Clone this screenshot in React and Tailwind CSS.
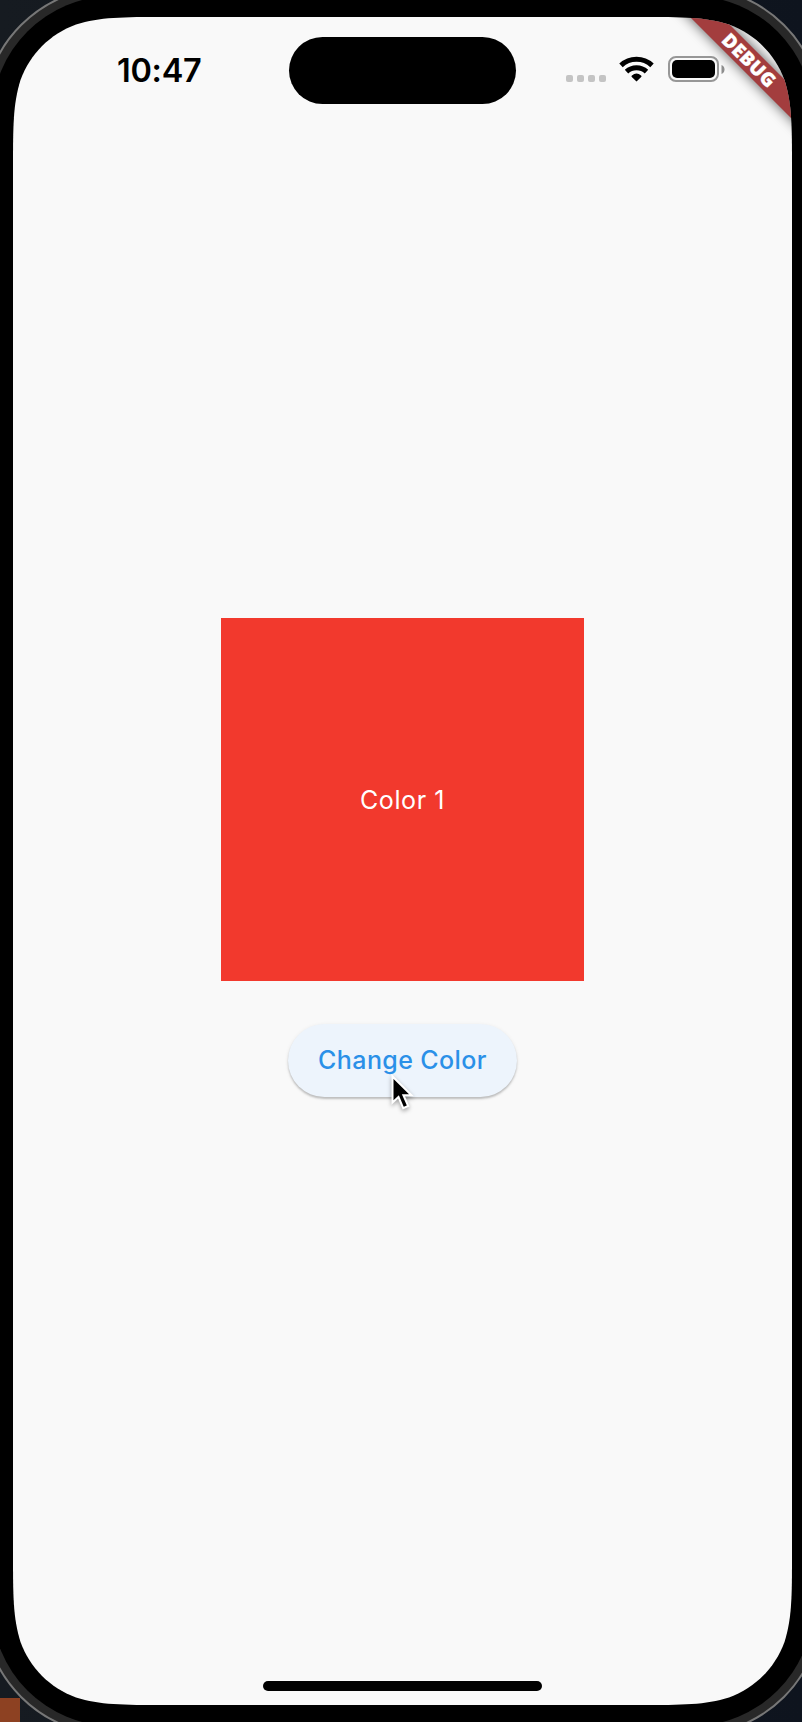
function WifiIcon() {
  return (
    <svg width="35" height="26" viewBox="0 0 35 26" className="block">
      <g fill="none" stroke="#000" strokeWidth="5">
        <path d="M2 9.4A22.6 22.6 0 0 1 33 9.4" />
        <path d="M7.5 15.6A14.6 14.6 0 0 1 27.5 15.6" />
      </g>
      <path d="M17.5 25.6l-4.7-4.7a1 1 0 0 1 .1-1.5a7.2 7.2 0 0 1 9.2 0a1 1 0 0 1 .1 1.5z" />
    </svg>
  );
}

function BatteryIcon() {
  return (
    <div className="flex items-center gap-[2px]">
      <div className="h-[26px] w-[51px] rounded-[8px] border-2 border-[#979797] p-[2px]">
        <div className="h-full rounded-[5px] bg-black" />
      </div>
      <svg width="4" height="9" viewBox="0 0 4 9">
        <path d="M.5 0Q3.5 1.2 3.5 4.5T.5 9z" fill="#8e8e8e" />
      </svg>
    </div>
  );
}

function DebugBanner() {
  return (
    <svg width="140" height="140" viewBox="639 0 140 140" className="absolute right-0 top-0">
      <defs>
        <filter id="soft" x="-30%" y="-30%" width="160%" height="160%">
          <feGaussianBlur stdDeviation="6.5" />
        </filter>
      </defs>
      <path d="M657 -20L689 -20L799 90L799 122Z" fill="#000" opacity=".65" filter="url(#soft)" />
      <path d="M657 -20L689 -20L799 90L799 122Z" fill="#a33d3e" />
      <text
        transform="translate(736 43.2) rotate(45)"
        y="6.8"
        textAnchor="middle"
        textLength="67"
        fill="#fff"
        stroke="#fff"
        strokeWidth=".3"
        className="font-['Open_Sans',sans-serif] text-[19px] font-extrabold"
      >
        DEBUG
      </text>
    </svg>
  );
}

function StatusBar() {
  return (
    <header className="flex h-[104px] items-start pt-[20px]">
      <div className="w-[276px] pl-[104px] pt-[14px] font-['Inter',sans-serif] text-[32.5px] font-semibold leading-[40px] tracking-[-0.3px] text-black">
        10:47
      </div>
      <div className="h-[67px] w-[227px] rounded-full bg-black" />
      <div className="flex pl-[50px] pt-[19px]">
        <div className="flex gap-[4px] pt-[19px]">
          <i className="size-[7px] rounded-[2px] bg-[#c4c4c4]" />
          <i className="size-[7px] rounded-[2px] bg-[#c4c4c4]" />
          <i className="size-[7px] rounded-[2px] bg-[#c4c4c4]" />
          <i className="size-[7px] rounded-[2px] bg-[#c4c4c4]" />
        </div>
        <div className="ml-[13px]">
          <WifiIcon />
        </div>
        <div className="ml-[14px]">
          <BatteryIcon />
        </div>
      </div>
    </header>
  );
}

function Cursor() {
  return (
    <svg width="28" height="44" viewBox="0 0 28 44" className="absolute left-[102px] top-[49px] drop-shadow-[0_2px_2px_rgba(0,0,0,0.35)]">
      <path
        d="M2.5 3.5V29.5L8.5 24L13.2 35.2L18.2 33L13.4 22.2H21.5Z"
        fill="#000"
        stroke="#fff"
        strokeWidth="2"
      />
    </svg>
  );
}

export default function App() {
  return (
    <div className="relative h-[1722px] w-[802px] overflow-hidden bg-linear-to-r from-[#161b21] to-[#0e141e]">
      <div className="absolute bottom-0 left-0 h-[24px] w-[20px] bg-[#8d4122]" />
      <div className="relative -ml-[18px] -mt-[14px] h-[1750px] w-[841px] rounded-[131px] border-2 border-[#777] bg-[#282828] p-[8px]">
        <div className="h-full rounded-[121px] bg-black p-[21px]">
          <main className="relative flex h-[1688px] w-[779px] flex-col items-center bg-[#f9f9f9] [clip-path:path('M153_0H626C670_0_692_0_716_7.5C742_17_762_37_771.5_63C779_87_779_109_779_153V1535C779_1579_779_1601_771.5_1625C762_1651_742_1671_716_1680.5C692_1688_670_1688_626_1688H153C109_1688_87_1688_63_1680.5C37_1671_17_1651_7.5_1625C0_1601_0_1579_0_1535V153C0_109_0_87_7.5_63C17_37_37_17_63_7.5C87_0_109_0_153_0Z')]">
            <div className="w-full">
              <StatusBar />
            </div>
            <div className="mt-[497px] flex size-[363px] items-center justify-center bg-[#f2392d] pt-[3px] font-['Inter',sans-serif] text-[25px] tracking-[0.6px] text-white">
              Color 1
            </div>
            <div className="relative mt-[43px]">
              <button className="flex h-[73px] w-[229px] items-center justify-center rounded-full bg-[#edf4fc] pt-[1px] font-['Inter',sans-serif] text-[25px] font-medium tracking-[0.4px] text-[#2a90e8] shadow-[0_2px_2px_rgba(0,0,0,0.2),0_1px_4px_rgba(0,0,0,0.08)]">
                Change Color
              </button>
              <Cursor />
            </div>
            <div className="mb-[14px] mt-auto h-[10px] w-[279px] rounded-full bg-black" />
            <DebugBanner />
          </main>
        </div>
      </div>
    </div>
  );
}
